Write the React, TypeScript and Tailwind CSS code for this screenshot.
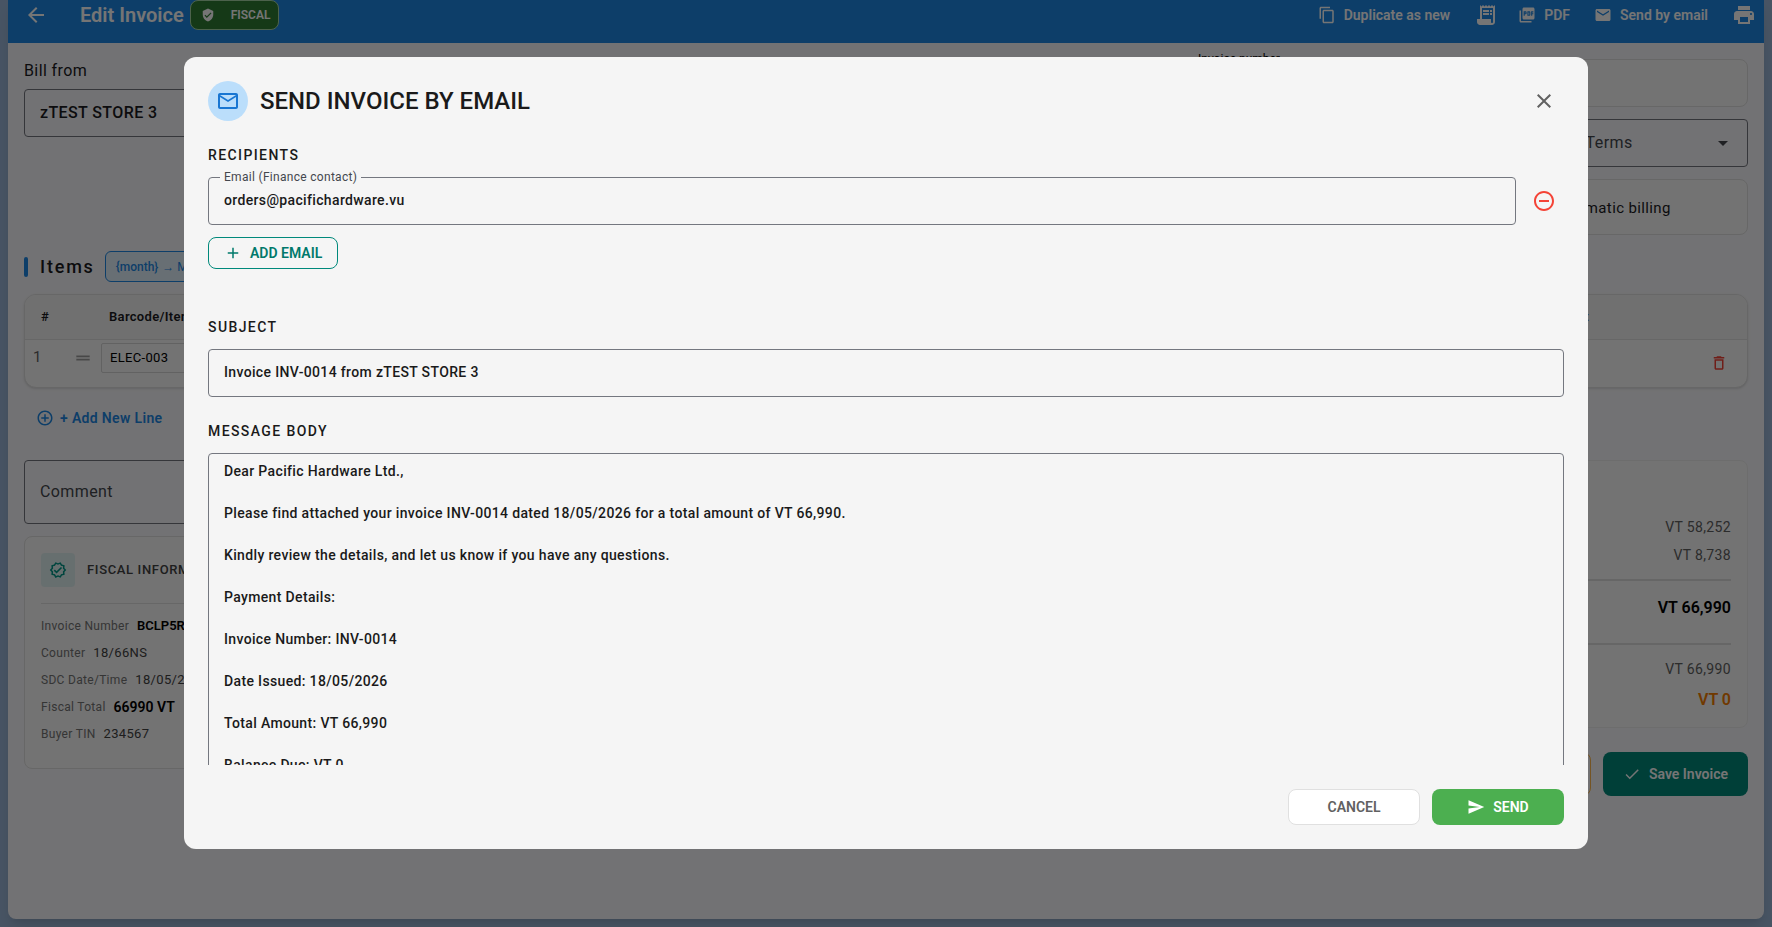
import { useState } from "react";
import type { ReactNode } from "react";
import {
  MdAdd,
  MdAddCircleOutline,
  MdArrowBack,
  MdArrowDropDown,
  MdCheck,
  MdClose,
  MdContentCopy,
  MdDeleteOutline,
  MdDragHandle,
  MdEmail,
  MdMailOutline,
  MdOutlineVerified,
  MdPictureAsPdf,
  MdPrint,
  MdReceiptLong,
  MdRemoveCircleOutline,
  MdSend,
  MdVerifiedUser,
} from "react-icons/md";

const message = `Dear Pacific Hardware Ltd.,

Please find attached your invoice INV-0014 dated 18/05/2026 for a total amount of VT 66,990.

Kindly review the details, and let us know if you have any questions.

Payment Details:

Invoice Number: INV-0014

Date Issued: 18/05/2026

Total Amount: VT 66,990

Balance Due: VT 0

Thank you for your business.`;

const fiscalRows = [
  { label: "Invoice Number", value: "BCLP5R7K-18", style: "text-[13px] font-semibold text-black" },
  { label: "Counter", value: "18/66NS", style: "text-[13px] tracking-wide text-[#424242]" },
  { label: "SDC Date/Time", value: "18/05/2026", style: "text-[13px] tracking-wide text-[#424242]" },
  { label: "Fiscal Total", value: "66990 VT", style: "text-sm font-semibold text-black" },
  { label: "Buyer TIN", value: "234567", style: "text-[13px] tracking-wide text-[#424242]" },
];

function HeaderAction({ icon, label }: { icon: ReactNode; label: string }) {
  return (
    <button className="flex items-center gap-2 text-sm font-semibold whitespace-nowrap">
      {icon}
      {label}
    </button>
  );
}

function TopBar() {
  return (
    <header className="flex h-[43px] shrink-0 items-center bg-[#1e88e5] pr-2 pb-[13px] pl-4 text-white">
      <button aria-label="Back">
        <MdArrowBack size={24} />
      </button>
      <h1 className="ml-8 text-xl font-semibold">Edit Invoice</h1>
      <span className="ml-1.5 flex h-[30px] items-center gap-4 rounded-lg border border-[#a5d6a7] bg-[#2e7d32] px-2 pl-2.5 text-xs font-semibold">
        <MdVerifiedUser size={14} />
        FISCAL
      </span>
      <div className="ml-auto flex items-center gap-6">
        <HeaderAction icon={<MdContentCopy size={18} />} label="Duplicate as new" />
        <div className="flex items-center gap-5">
          <button aria-label="Receipt">
            <MdReceiptLong size={24} />
          </button>
          <HeaderAction icon={<MdPictureAsPdf size={18} />} label="PDF" />
        </div>
        <HeaderAction icon={<MdEmail size={18} />} label="Send by email" />
        <button aria-label="Print">
          <MdPrint size={24} />
        </button>
      </div>
    </header>
  );
}

function InvoiceDetails() {
  return (
    <div className="flex h-[177px] justify-between">
      <div className="w-[360px]">
        <label htmlFor="bill-from" className="block text-base leading-6 tracking-wide text-[#1b1b1f]">
          Bill from
        </label>
        <input
          id="bill-from"
          readOnly
          value="zTEST STORE 3"
          className="mt-1.5 h-12 w-full rounded border border-[#74777f] px-[15px] pb-0.5 text-base font-medium tracking-wide text-[#1b1b1f]"
        />
      </div>
      <div className="flex gap-3">
        <fieldset className="-mt-2 h-14 w-[310px] rounded border border-[#74777f] px-3">
          <legend className="px-1 text-xs leading-4 text-black">Invoice number</legend>
        </fieldset>
        <div className="flex w-[245px] flex-col gap-3">
          <div className="h-12 rounded-lg border border-[#e0e0e0] bg-[#fafafa]" />
          <button className="flex h-12 items-center justify-between rounded border border-[#74777f] px-3 text-base tracking-wide text-[#44474e]">
            Payment Terms
            <MdArrowDropDown size={24} />
          </button>
          <div className="flex h-14 items-center rounded-lg border border-[#e0e0e0] bg-[#fafafa] pt-0.5 pl-12 text-[15px] tracking-wide text-[#1b1b1f]">
            Automatic billing
          </div>
        </div>
      </div>
    </div>
  );
}

function ItemsTable() {
  return (
    <div className="mt-3 h-[94px] overflow-hidden rounded-xl border border-[#e0e0e0] bg-[#fafafa] shadow-sm">
      <table className="w-full table-fixed text-left">
        <thead className="bg-[#f5f5f5] text-[13px] font-semibold tracking-wide text-[#1b1b1f]">
          <tr className="h-11 border-b border-[#e0e0e0]">
            <th className="w-[76px] pl-4 font-semibold">#</th>
            <th className="w-[300px] pl-2 font-semibold">Barcode/Item</th>
            <th className="pr-5 text-right font-semibold">Amount</th>
            <th className="w-[138px]" />
          </tr>
        </thead>
        <tbody>
          <tr>
            <td className="pt-[3px] pl-2 align-top">
              <div className="flex h-[30px] items-center justify-between pr-2 text-[15px] text-[#616161]">
                1
                <MdDragHandle size={20} className="text-[#9e9e9e]" />
              </div>
            </td>
            <td className="pt-[3px] align-top">
              <input
                aria-label="Barcode"
                readOnly
                value="ELEC-003"
                className="block h-[30px] w-full rounded-xs border border-[#d6d6d6] px-2 text-[13px] tracking-wide text-black"
              />
            </td>
            <td />
            <td className="pt-3.5 pl-[101px] align-top">
              <button aria-label="Delete line" className="block text-[#f44336]">
                <MdDeleteOutline size={18} />
              </button>
            </td>
          </tr>
        </tbody>
      </table>
    </div>
  );
}

function FiscalCard() {
  return (
    <section className="h-[233px] w-[560px] rounded-lg border border-[#e0e0e0] bg-[#fafafa] px-4 pt-4">
      <div className="flex items-center gap-3 border-b border-[#e0e0e0] pb-4">
        <div className="flex size-[34px] items-center justify-center rounded bg-[#e0f2f1] text-[#009688]">
          <MdOutlineVerified size={18} />
        </div>
        <h2 className="text-[13px] font-medium tracking-wider text-[#424242]">FISCAL INFORMATION</h2>
      </div>
      <dl className="mt-2 text-xs">
        {fiscalRows.map((row) => (
          <div key={row.label} className="flex h-[27px] items-center gap-2">
            <dt className="tracking-wide text-[#757575]">{row.label}</dt>
            <dd className={row.style}>{row.value}</dd>
          </div>
        ))}
      </dl>
    </section>
  );
}

function Totals() {
  return (
    <div className="w-[560px]">
      <section className="flex h-[268px] flex-col justify-end rounded-lg border border-[#eeeeee] bg-[#fafafa] px-4 pb-3 text-right text-sm tracking-wide text-[#616161]">
        <p className="leading-7">VT 58,252</p>
        <p className="leading-7">VT 8,738</p>
        <p className="my-2.5 border-y-2 border-[#dedede] pt-3 pb-5 text-base leading-[30px] font-semibold tracking-normal text-black">
          VT 66,990
        </p>
        <p className="leading-7">VT 66,990</p>
        <p className="pt-0.5 text-base leading-[30px] font-semibold tracking-normal text-[#f57c00]">VT 0</p>
      </section>
      <div className="mt-6 flex justify-end gap-3">
        <button className="h-11 rounded-lg border border-[#ffb74d] px-8 text-sm font-semibold text-[#f57c00]">
          Mark unpaid
        </button>
        <button className="flex h-11 items-center gap-2 rounded-lg bg-[#00897b] px-5 text-sm font-semibold text-white">
          <MdCheck size={18} />
          Save Invoice
        </button>
      </div>
    </div>
  );
}

function InvoicePage() {
  return (
    <div className="flex h-full flex-col overflow-hidden rounded-b-lg bg-[#f9f9fc] shadow-lg">
      <TopBar />
      <main className="px-4 pt-4">
        <InvoiceDetails />
        <div className="mt-[15px] flex items-center">
          <span className="h-5 w-1 rounded-sm bg-[#1e88e5]" />
          <h2 className="ml-3 text-lg font-medium tracking-widest text-[#1b1b1f]">Items</h2>
          <span className="ml-2.5 flex h-[31px] items-center gap-1 rounded-md border border-[#1e88e5] bg-[#e3f2fd] px-2.5 text-xs text-[#1e88e5]">
            <b className="font-medium">{"{month}"}</b> → May 2026
          </span>
        </div>
        <ItemsTable />
        <button className="mt-[19px] ml-3 flex items-center gap-1.5 text-sm leading-[22px] font-semibold tracking-wide text-[#1e88e5]">
          <MdAddCircleOutline size={18} />
          + Add New Line
        </button>
        <div className="mt-[31px] flex justify-between">
          <div className="flex flex-col gap-3">
            <input
              aria-label="Comment"
              placeholder="Comment"
              className="h-16 rounded border border-[#74777f] px-[15px] pb-0.5 text-base tracking-wide placeholder:text-[#44474e]"
            />
            <FiscalCard />
          </div>
          <Totals />
        </div>
      </main>
    </div>
  );
}

function SectionLabel({ htmlFor, children }: { htmlFor: string; children: ReactNode }) {
  return (
    <label htmlFor={htmlFor} className="block text-sm leading-5 font-medium tracking-widest">
      {children}
    </label>
  );
}

function SendInvoiceDialog() {
  const [email, setEmail] = useState("orders@pacifichardware.vu");
  const [subject, setSubject] = useState("Invoice INV-0014 from zTEST STORE 3");
  const [body, setBody] = useState(message);

  return (
    <div
      role="dialog"
      aria-labelledby="dialog-title"
      className="flex h-full flex-col rounded-xl bg-[#f5f5f5] p-6 text-[#1a1a1a]"
    >
      <div className="flex items-center">
        <div className="flex size-10 items-center justify-center rounded-full bg-[#bbdefb] text-[#1976d2]">
          <MdMailOutline size={24} />
        </div>
        <h2 id="dialog-title" className="ml-3 text-2xl font-medium">
          SEND INVOICE BY EMAIL
        </h2>
        <button aria-label="Close" className="ml-auto flex size-10 items-center justify-center text-[#616161]">
          <MdClose size={24} />
        </button>
      </div>

      <div className="mt-6 flex min-h-0 flex-1 flex-col overflow-hidden">
        <SectionLabel htmlFor="email">RECIPIENTS</SectionLabel>
        <div className="mt-1 flex items-center gap-2">
          <fieldset className="h-14 flex-1 rounded border border-[#74777f] px-[11px]">
            <legend className="px-1 text-xs leading-4 tracking-wide text-[#44474e]">Email (Finance contact)</legend>
            <input
              id="email"
              type="email"
              aria-label="Email (Finance contact)"
              value={email}
              onChange={(e) => setEmail(e.target.value)}
              className="block h-[30px] w-full px-1 text-sm font-medium tracking-wide outline-none"
            />
          </fieldset>
          <button
            aria-label="Remove email"
            className="mt-2 flex size-10 items-center justify-center text-[#f44336]"
          >
            <MdRemoveCircleOutline size={24} />
          </button>
        </div>
        <button className="mt-3 flex h-8 shrink-0 items-center gap-2 self-start rounded-lg border border-[#00897b] px-[15px] text-sm font-semibold text-[#00796b]">
          <MdAdd size={18} />
          ADD EMAIL
        </button>

        <div className="mt-12">
          <SectionLabel htmlFor="subject">SUBJECT</SectionLabel>
          <input
            id="subject"
            value={subject}
            onChange={(e) => setSubject(e.target.value)}
            className="mt-3 h-12 w-full rounded border border-[#74777f] px-[15px] pb-0.5 text-sm font-medium tracking-wide"
          />
        </div>

        <div className="mt-6">
          <SectionLabel htmlFor="body">MESSAGE BODY</SectionLabel>
          <textarea
            id="body"
            rows={18}
            value={body}
            onChange={(e) => setBody(e.target.value)}
            className="mt-3 w-full resize-none overflow-hidden rounded border border-[#74777f] px-[15px] py-[7px] text-sm leading-[21px] font-medium tracking-wide"
          />
        </div>
      </div>

      <div className="mt-6 flex justify-end gap-3">
        <button className="h-9 w-[132px] rounded-lg border border-[#e0e0e0] bg-white text-sm font-semibold text-[#616161]">
          CANCEL
        </button>
        <button className="flex h-9 w-[132px] items-center justify-center gap-2 rounded-lg bg-[#4caf50] text-sm font-semibold text-white">
          <MdSend size={18} />
          SEND
        </button>
      </div>
    </div>
  );
}

export default function App() {
  return (
    <div className="h-screen overflow-hidden bg-[#9db8d9] px-2 pb-2 font-['Roboto',sans-serif]">
      <InvoicePage />
      <div className="fixed inset-0 bg-black/54 px-[184px] pt-[57px] pb-[78px]">
        <SendInvoiceDialog />
      </div>
    </div>
  );
}
